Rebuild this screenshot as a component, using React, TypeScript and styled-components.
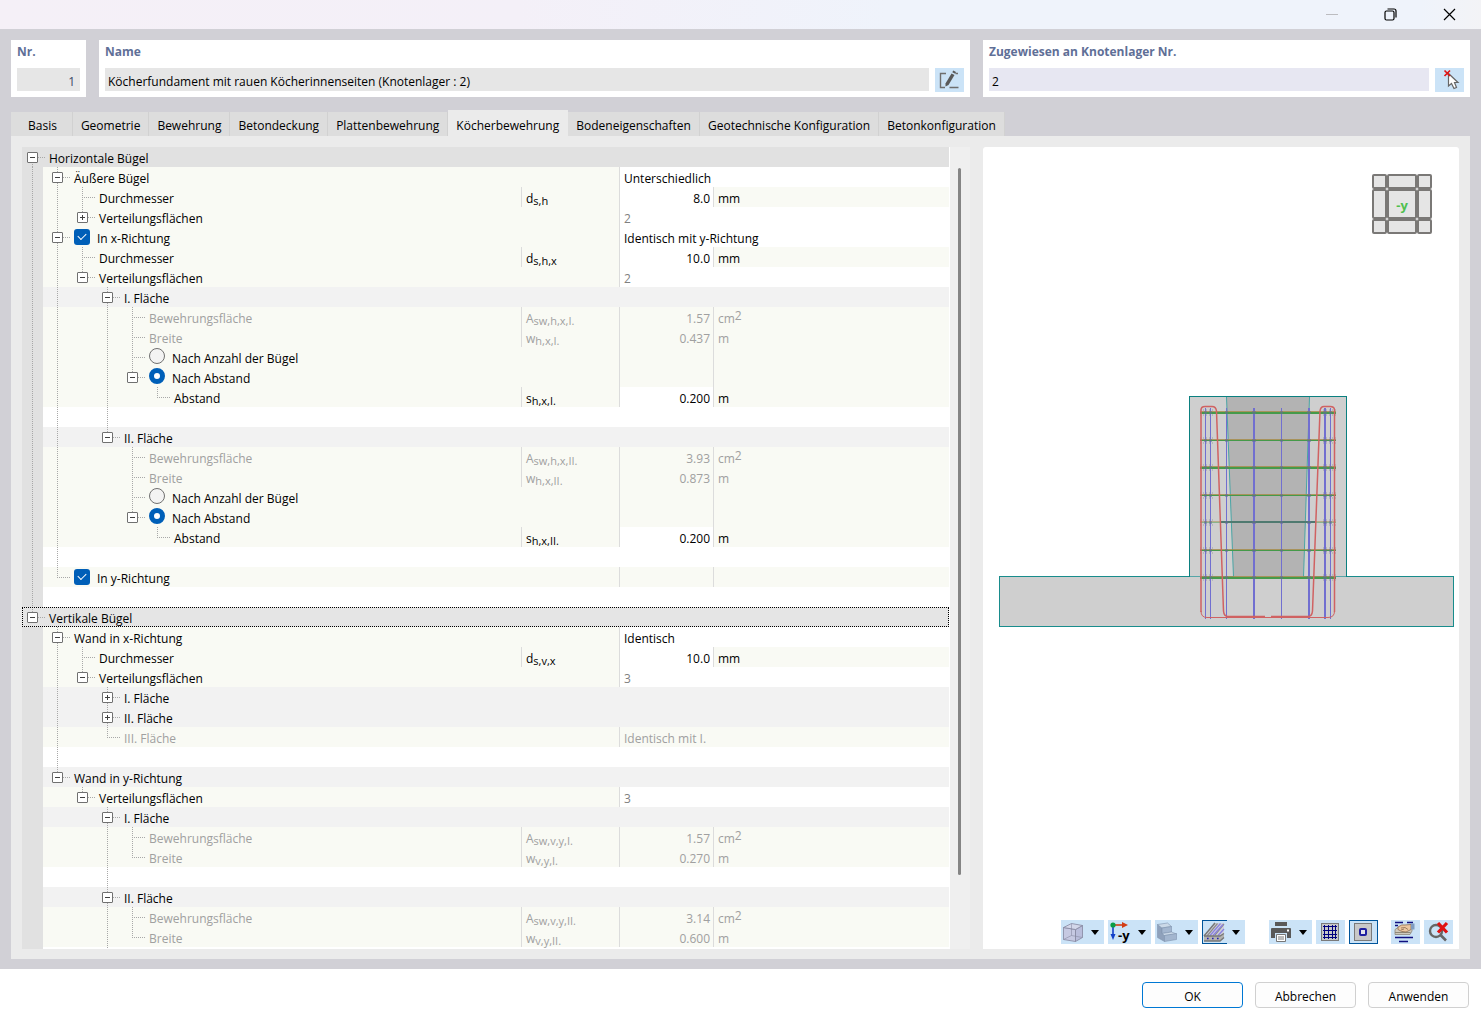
import React from "react";
import styled, { createGlobalStyle, css } from "styled-components";

const c = {
  frame: "#d1d0d6",
  page: "#ebebeb",
  tab: "#dddddd",
  group: "#e1e1e1",
  section: "#f2f2f2",
  cell: "#f9faf4",
  line: "#dcdcdc",
  dots: "#a8a8a8",
  muted: "#a0a0a0",
  count: "#808080",
  accent: "#005fb8",
  tool: "#cbe3f7",
  caption: "#5f6f97",
};

const GlobalStyle = createGlobalStyle`
  *, *::before, *::after { box-sizing: border-box; }
  body { margin: 0; }
  body, button, input { font-family: "Open Sans", "Noto Sans", sans-serif; font-size: 12px; line-height: 20px; color: #000; }
`;

const Dialog = styled.div`
  height: 100vh;
  display: flex;
  flex-direction: column;
  background: #fff;
`;

const TitleBar = styled.header`
  flex: none;
  height: 29px;
  display: flex;
  justify-content: flex-end;
  background: linear-gradient(90deg, #f5f0f7 0%, #f4f0f8 35%, #eff3fb 60%, #eff3fb 96%, #f3f3f6 100%);
`;

const WindowButton = styled.button`
  width: 58px;
  padding: 0;
  border: 0;
  background: none;
  display: grid;
  place-items: center;
  &:last-child { width: 62px; padding-right: 2px; }
`;

const Body = styled.main`
  flex: 1;
  min-height: 0;
  display: flex;
  flex-direction: column;
  padding: 11px 11px 10px;
  background: ${c.frame};
`;

const Cards = styled.div`
  flex: none;
  display: grid;
  grid-template-columns: 75px minmax(0, 1fr) 487px;
  gap: 13px;
`;

const Card = styled.div`
  height: 57px;
  padding: 2px 6px 5px;
  display: flex;
  flex-direction: column;
  justify-content: space-between;
  background: #fff;
`;

const Caption = styled.label`
  font-weight: 700;
  color: ${c.caption};
`;

const FieldRow = styled.div`
  display: flex;
  gap: 6px;
  height: 24px;
`;

const Field = styled.input<{ $tone?: string; $right?: boolean }>`
  flex: 1;
  min-width: 0;
  height: 23px;
  padding: 3px ${(p) => (p.$right ? 5 : 3)}px 0;
  border: 0;
  background: ${(p) => p.$tone ?? "#e6e6e6"};
  color: ${(p) => (p.$right ? "#3c4a66" : "#000")};
  text-align: ${(p) => (p.$right ? "right" : "left")};
`;

const ToolButton = styled.button<{ $wide?: boolean; $on?: boolean }>`
  flex: none;
  position: relative;
  width: ${(p) => (p.$wide ? 43 : 29)}px;
  height: 24px;
  padding: 0 0 0 ${(p) => (p.$wide ? 0 : 2)}px;
  border: 0;
  background: ${c.tool};
  display: flex;
  align-items: center;
  ${(p) => p.$on && !p.$wide && css`box-shadow: inset 0 0 0 1px #00559b;`}
  ${(p) => p.$on && p.$wide && css`
    &::before {
      content: "";
      position: absolute;
      inset: 0 18px 0 0;
      border: 1px solid #00559b;
      border-right: 0;
    }
  `}
`;

const Tabs = styled.nav`
  flex: none;
  display: flex;
  align-items: flex-end;
  height: 26px;
  margin-top: 13px;
`;

const Tab = styled.button<{ $active?: boolean }>`
  height: ${(p) => (p.$active ? 26 : 24)}px;
  padding: ${(p) => (p.$active ? 5 : 3)}px 8px 0;
  border: 0;
  border-right: 1px solid ${(p) => (p.$active ? c.page : "#d1d1d1")};
  background: ${(p) => (p.$active ? c.page : c.tab)};
  white-space: nowrap;
  &:first-child { padding: 3px 15px 0 17px; }
`;

const Page = styled.section`
  flex: 1;
  min-height: 0;
  padding: 11px 11px 10px;
  display: grid;
  grid-template-columns: minmax(0, 1fr) 476px;
  grid-template-rows: minmax(0, 1fr);
  gap: 13px;
  background: ${c.page};
`;

const TreePane = styled.div`
  display: flex;
  overflow: hidden;
  background: linear-gradient(90deg, ${c.group} 21px, #fff 21px);
`;

const TreeTable = styled.table`
  flex: 1;
  align-self: flex-start;
  min-width: 0;
  margin-right: 1px;
  table-layout: fixed;
  border-collapse: collapse;
`;

const Col = styled.col<{ $w?: number }>`
  width: ${(p) => (p.$w ? `${p.$w}px` : "auto")};
`;

const ScrollTrack = styled.div`
  flex: none;
  width: 20px;
  padding: 21px 8px 0;
  background: #efefef;
`;

const ScrollThumb = styled.div`
  width: 3px;
  height: 90.5%;
  border-radius: 2px;
  background: #858585;
`;

type Tone = "cell" | "section" | "group" | "blank";
const toneColor: Record<Tone, string> = { cell: c.cell, section: c.section, group: c.group, blank: "#fff" };

const Row = styled.tr<{ $tone: Tone; $focus?: boolean }>`
  height: 20px;
  background: ${(p) => toneColor[p.$tone]};
  ${(p) => p.$focus && css`outline: 1px dotted #000; outline-offset: -1px; background: #e5e5e5;`}
`;

const Cell = styled.td<{ $line?: boolean; $white?: boolean; $ink?: string; $right?: boolean }>`
  height: 20px;
  padding: 4px ${(p) => (p.$right ? 3 : 4)}px 0 ${(p) => (p.$line ? 5 : 0)}px;
  line-height: 16px;
  white-space: nowrap;
  text-align: ${(p) => (p.$right ? "right" : "left")};
  color: ${(p) => p.$ink ?? "#000"};
  ${(p) => p.$white && css`background: #fff;`}
  ${(p) => p.$line && css`box-shadow: inset 1px 0 0 ${c.line};`}
  sub, sup { line-height: 0; }
  sub { font-size: 11px; vertical-align: -2px; }
  sup { font-size: 12px; vertical-align: 3px; }
`;

const LabelCell = styled.td`
  height: 20px;
  padding: 0;
`;

const LabelLine = styled.div`
  display: flex;
  height: 20px;
`;

const LabelText = styled.span<{ $muted?: boolean; $control?: boolean }>`
  padding: 4px 0 0 ${(p) => (p.$control ? 7 : 2)}px;
  line-height: 16px;
  white-space: nowrap;
  color: ${(p) => (p.$muted ? c.muted : "#000")};
`;

const ControlLabel = styled.label`
  display: flex;
  padding-left: 2px;
`;

type Guide = "none" | "full" | "half" | "low";

const guideArea: Record<Guide, string> = {
  none: "0 0",
  full: "1px 20px",
  half: "1px 11px",
  low: "1px 9px",
};

/* One indentation step: vertical guide, plus the connector for the row's own step. */
const Step = styled.span<{ $guide: Guide; $gutter?: boolean; $own?: boolean }>`
  flex: none;
  width: 25px;
  height: 20px;
  padding: 5px 0 0 5px;
  background-repeat: no-repeat;
  background-image: repeating-linear-gradient(${c.dots} 0 1px, transparent 1px 2px),
    repeating-linear-gradient(90deg, ${c.dots} 0 1px, transparent 1px 2px),
    linear-gradient(${c.group}, ${c.group});
  background-size: ${(p) => guideArea[p.$guide]}, ${(p) => (p.$own ? "13px 1px" : "0 0")},
    ${(p) => (p.$gutter ? "21px 20px" : "0 0")};
  background-position: 10px ${(p) => (p.$guide === "low" ? 11 : 0)}px, 10px 10px, 0 0;
`;

const Toggle = styled.button`
  display: block;
  width: 11px;
  height: 11px;
  padding: 0;
  border: 1px solid #707070;
  border-radius: 1px;
  background: #fff;
  svg { display: block; }
`;

const Check = styled.input`
  appearance: none;
  width: 16px;
  height: 16px;
  margin: 2px 0 0;
  border-radius: 3px;
  background: ${c.accent};
  display: grid;
  place-items: center;
  &::before {
    content: "";
    width: 8px;
    height: 5px;
    margin-top: -3px;
    border: solid #fff;
    border-width: 0 0 1px 1px;
    transform: rotate(-45deg);
  }
`;

const Radio = styled.input`
  appearance: none;
  width: 16px;
  height: 16px;
  margin: 1px 0 0;
  border: 1px solid #707070;
  border-radius: 50%;
  background: #f3f3f3;
  &:checked { border: 5px solid ${c.accent}; background: #fff; }
`;

const ValueInput = styled.input`
  display: block;
  width: 100%;
  height: 16px;
  padding: 0;
  border: 0;
  background: none;
  text-align: right;
  line-height: 16px;
`;

const View = styled.div`
  position: relative;
  display: flex;
  flex-direction: column;
  border-radius: 3px 3px 0 0;
  background: #fff;
`;

const Scene = styled.svg`
  flex: 1;
  min-height: 0;
  width: 100%;
`;

const NavCube = styled.svg`
  position: absolute;
  top: 27px;
  right: 27px;
`;

const Toolbar = styled.div`
  flex: none;
  display: flex;
  justify-content: flex-end;
  gap: 4px;
  padding: 5px 6px 5px;
`;

const Spacer = styled.span<{ $w: number }>`
  width: ${(p) => p.$w}px;
`;

const Footer = styled.footer`
  flex: none;
  display: flex;
  justify-content: flex-end;
  gap: 12px;
  height: 51px;
  padding: 13px 12px 0;
`;

const FooterButton = styled.button<{ $primary?: boolean }>`
  width: 101px;
  height: 26px;
  padding: 3px 0 0;
  border: 1px solid ${(p) => (p.$primary ? "#0078d4" : "#d0d0d0")};
  border-radius: 4px;
  background: #fdfdfd;
`;

type Kind = "plain" | "check" | "radio" | "radioOn";
interface Item {
  label?: string;
  guides: string;
  box?: "+" | "-";
  kind?: Kind;
  tone?: Tone;
  muted?: boolean;
  focus?: boolean;
  sym?: [string, string];
  value?: string;
  unit?: string;
  wide?: string;
  wideMuted?: boolean;
  split?: boolean;
}

const g: Record<string, Guide> = { "|": "full", ".": "none", L: "half", r: "low" };

const flaeche = (roman: string, area: string, width: string): Item[] => [
  { label: `${roman} Fläche`, guides: "||.|", box: "-", tone: "section" },
  { label: "Bewehrungsfläche", guides: "||.||", muted: true, sym: ["A", `sw,h,x,${roman}`], value: area, unit: "cm2" },
  { label: "Breite", guides: "||.||", muted: true, sym: ["w", `h,x,${roman}`], value: width, unit: "m" },
  { label: "Nach Anzahl der Bügel", guides: "||.||", kind: "radio", split: true },
  { label: "Nach Abstand", guides: "||.|L", box: "-", kind: "radioOn", split: true },
  { label: "Abstand", guides: "||.|.L", sym: ["s", `h,x,${roman}`], value: "0.200", unit: "m" },
];

const second = flaeche("II.", "3.93", "0.873").map((it, i) => ({
  ...it,
  guides: i === 0 ? "||.L" : it.guides.slice(0, 3) + "." + it.guides.slice(4),
}));

const items: Item[] = [
  { label: "Horizontale Bügel", guides: "r", box: "-", tone: "group" },
  { label: "Äußere Bügel", guides: "||", box: "-", wide: "Unterschiedlich" },
  { label: "Durchmesser", guides: "|||", sym: ["d", "s,h"], value: "8.0", unit: "mm" },
  { label: "Verteilungsflächen", guides: "||L", box: "+", wide: "2", wideMuted: true },
  { label: "In x-Richtung", guides: "||", box: "-", kind: "check", wide: "Identisch mit y-Richtung" },
  { label: "Durchmesser", guides: "|||", sym: ["d", "s,h,x"], value: "10.0", unit: "mm" },
  { label: "Verteilungsflächen", guides: "||L", box: "-", wide: "2", wideMuted: true },
  ...flaeche("I.", "1.57", "0.437"),
  { guides: "||.|", tone: "blank" },
  ...second,
  { guides: "||", tone: "blank" },
  { label: "In y-Richtung", guides: "|L", kind: "check", split: true },
  { guides: "|", tone: "blank" },
  { label: "Vertikale Bügel", guides: "L", box: "-", tone: "group", focus: true },
  { label: "Wand in x-Richtung", guides: ".|", box: "-", wide: "Identisch" },
  { label: "Durchmesser", guides: ".||", sym: ["d", "s,v,x"], value: "10.0", unit: "mm" },
  { label: "Verteilungsflächen", guides: ".|L", box: "-", wide: "3", wideMuted: true },
  { label: "I. Fläche", guides: ".|.|", box: "+", tone: "section" },
  { label: "II. Fläche", guides: ".|.|", box: "+", tone: "section" },
  { label: "III. Fläche", guides: ".|.L", muted: true, wide: "Identisch mit I." },
  { guides: ".|", tone: "blank" },
  { label: "Wand in y-Richtung", guides: ".L", box: "-", tone: "section" },
  { label: "Verteilungsflächen", guides: "..L", box: "-", wide: "3", wideMuted: true },
  { label: "I. Fläche", guides: "...|", box: "-", tone: "section" },
  { label: "Bewehrungsfläche", guides: "...||", muted: true, sym: ["A", "sw,v,y,I."], value: "1.57", unit: "cm2" },
  { label: "Breite", guides: "...|L", muted: true, sym: ["w", "v,y,I."], value: "0.270", unit: "m" },
  { guides: "...|", tone: "blank" },
  { label: "II. Fläche", guides: "...|", box: "-", tone: "section" },
  { label: "Bewehrungsfläche", guides: "...||", muted: true, sym: ["A", "sw,v,y,II."], value: "3.14", unit: "cm2" },
  { label: "Breite", guides: "...|L", muted: true, sym: ["w", "v,y,II."], value: "0.600", unit: "m" },
  { guides: "...|", tone: "blank" },
];

function TreeLabel({ item, index }: { item: Item; index: number }) {
  const steps = item.guides.split("");
  const { kind = "plain", label, box, muted } = item;
  return (
    <LabelLine>
      {steps.map((s, i) => {
        const own = !!label && i === steps.length - 1;
        return (
          <Step key={i} $guide={g[s]} $own={own} $gutter={i === 0 && item.tone !== "group"}>
            {own && box && (
              <Toggle type="button" aria-label={label} aria-expanded={box === "-"}>
                <svg width="9" height="9" viewBox="0 0 9 9" stroke="#404040" shapeRendering="crispEdges">
                  <path d={box === "-" ? "M2 4.5H7" : "M2 4.5H7M4.5 2V7"} />
                </svg>
              </Toggle>
            )}
          </Step>
        );
      })}
      {kind === "plain" ? (
        <LabelText $muted={muted}>{label}</LabelText>
      ) : (
        <ControlLabel>
          {kind === "check" ? (
            <Check type="checkbox" defaultChecked />
          ) : (
            <Radio type="radio" name={`mode-${kind === "radio" ? index : index - 1}`} defaultChecked={kind === "radioOn"} />
          )}
          <LabelText $control>{label}</LabelText>
        </ControlLabel>
      )}
    </LabelLine>
  );
}

function TreeRow({ item, index }: { item: Item; index: number }) {
  const { tone = "cell", sym, value, unit, muted, wide, split } = item;
  const full = tone !== "cell";
  const ink = muted ? c.muted : undefined;
  return (
    <Row $tone={tone} $focus={item.focus}>
      <LabelCell colSpan={full ? 4 : sym ? 1 : 2}>
        <TreeLabel item={item} index={index} />
      </LabelCell>
      {sym && (
        <Cell $line $ink={ink}>
          {sym[0]}
          <sub>{sym[1]}</sub>
        </Cell>
      )}
      {wide !== undefined && (
        <Cell colSpan={2} $line $white={!muted} $ink={item.wideMuted ? c.count : ink}>
          {wide}
        </Cell>
      )}
      {value !== undefined && (
        <>
          <Cell $line $right $white={!muted} $ink={ink}>
            {muted ? value : <ValueInput aria-label={`${item.label} ${sym?.join("")}`} defaultValue={value} />}
          </Cell>
          <Cell $line $ink={ink}>
            {unit === "cm2" ? <>cm<sup>2</sup></> : unit}
          </Cell>
        </>
      )}
      {split && (
        <>
          <Cell $line />
          <Cell $line />
        </>
      )}
    </Row>
  );
}

const levels = [265, 293, 320, 348, 375, 403, 430];
const bars: [number, number][] = [[222, 1], [227, 1], [243, 1], [270, 2], [298, 1], [325, 2], [341, 2], [347, 1]];

function Model() {
  return (
    <Scene viewBox="0 0 476 768" preserveAspectRatio="xMidYMid meet" role="img" aria-label="Köcherfundament">
      <rect x="16.5" y="429.5" width="454" height="50" fill="#cfcfcf" stroke="#188c8c" />
      <rect x="206.5" y="249.5" width="157" height="180" fill="#cfcfcf" stroke="#0b8080" />
      <path d="M207 429.5H363" stroke="#56a6a8" />
      <path d="M243.5 250H326.5L320.5 430H250.5Z" fill="#b3b3b3" />
      <path d="M243.5 250L250.5 430M326.5 250L320.5 430" fill="none" stroke="#4aa5a5" />
      <path d="M206.5 249.5H363.5" stroke="#0b8080" />
      {bars.map(([x, w]) => (
        <rect key={x} x={x} y="261" width={w} height="211" fill="#716fd0" />
      ))}
      {levels.map((y, i) => (
        <g key={y}>
          <rect x="217" y={y - 1} width="136" height="1" fill="#a48a45" opacity={i === 4 ? 0.5 : 0.8} />
          <rect x="217" y={y} width="136" height={i % 2 === 0 && i !== 4 ? 2 : 1} fill="#459a4a" opacity={i === 4 ? 0.5 : 1} />
          {i === 4 && <rect x="238" y={y - 1} width="94" height="2" fill="#4f7a70" />}
          <path
            d={`M217 ${y - 2}H230M217 ${y + 3}H230M340 ${y - 2}H353M340 ${y + 3}H353`}
            stroke="#8f8fa0"
            strokeDasharray="1 2"
            opacity=".8"
          />
          {bars.map(([x, w]) => (
            <rect key={x} x={x - 1} y={y - 1} width={w + 2} height="3" fill="#666a98" opacity=".5" />
          ))}
        </g>
      ))}
      <g fill="none" stroke="#d06262">
        <path d="M218 465V263Q218 259.500 222 259.500H229Q233 259.500 233.500 264L240.500 464Q241 469.500 245 469.500H282" strokeWidth="1.500" />
        <path d="M351.500 465V263Q351.500 259.500 347 259.500H341Q337.500 259.500 337 264L329.500 464Q329 469.500 325 469.500H288" strokeWidth="1.500" />
        <path d="M218 464Q218 470.500 224 470.500H345Q351.500 470.500 351.500 464" />
      </g>
    </Scene>
  );
}

function Cube() {
  const edges: [number, number][] = [[0, 15], [15, 30], [45, 15]];
  return (
    <NavCube width="60" height="60" viewBox="0 0 60 60">
      {edges.map(([y, h]) =>
        edges.map(([x, w]) => (
          <rect key={`${x}-${y}`} x={x + 1} y={y + 1} width={w - 2} height={h - 2} rx="1" fill="#e5e5e5" stroke="#7a7876" strokeWidth="2" />
        )),
      )}
      <text x="30" y="36" textAnchor="middle" fontFamily="Open Sans, sans-serif" fontSize="13" fontWeight="700" fill="#4fc04f">
        -y
      </text>
    </NavCube>
  );
}

const Arrow = () => (
  <svg width="8" height="5" viewBox="0 0 8 5">
    <path d="M0 0H8L4 5Z" fill="#000" />
  </svg>
);

const Icon = styled.svg`
  flex: none;
  width: 24px;
  height: 24px;
  margin: 0 6px 0 0;
  ${ToolButton} > &:only-child { margin: 0; }
`;

const BoxIcon = () => (
  <Icon viewBox="0 0 24 24" stroke="#85879f" strokeWidth=".8" strokeLinejoin="round">
    <path d="M2.500 7.500L14.500 9.500V21.500L2.500 19.500Z" fill="#c6c9e2" />
    <path d="M14.500 9.500L21.500 5.500V17.500L14.500 21.500Z" fill="#b9bddb" />
    <path d="M2.500 7.500L10.500 3.500L21.500 5.500L14.500 9.500Z" fill="#d3d7ea" />
    <path d="M10.500 3.500V15.500L2.500 19.500M10.500 15.500L21.500 17.500" fill="none" opacity=".7" />
  </Icon>
);

const AxisIcon = () => (
  <Icon viewBox="0 0 24 24">
    <path d="M5 5H15" stroke="#d23c14" strokeWidth="1.600" />
    <path d="M14 2L20 5L14 8Z" fill="#d23c14" />
    <path d="M5 5V15" stroke="#1340c8" strokeWidth="1.600" />
    <path d="M2.500 14H7.500L5 20Z" fill="#1340c8" />
    <circle cx="5" cy="5" r="2.600" fill="#0a9c46" />
    <text x="10" y="20" fontFamily="Open Sans, sans-serif" fontSize="13" fontWeight="700">
      -y
    </text>
  </Icon>
);

const StepsIcon = () => (
  <Icon viewBox="0 0 24 24" stroke="#7f93ae" strokeWidth=".6" strokeLinejoin="round">
    <path d="M2.500 4.500L7 8V13.500L9.500 15.500V21.500L2.500 17.500Z" fill="#8fa1bb" />
    <path d="M2.500 4.500L12.500 3L16.500 6.500L7 8Z" fill="#cbd9e8" />
    <path d="M7 8L16.500 6.500V12L7 13.500Z" fill="#a3b6cf" />
    <path d="M7 13.500L16.500 12L21.500 14L9.500 15.500Z" fill="#cbd9e8" />
    <path d="M9.500 15.500L21.500 13.500V19.500L9.500 21.500Z" fill="#a3b6cf" />
  </Icon>
);

const SectionIcon = () => (
  <Icon viewBox="0 0 24 24">
    <path d="M2 16L13 3H22V14L18 16Z" fill="#cfd0da" />
    <path d="M2 16L13 3" stroke="#777" strokeWidth="1.500" />
    <path d="M5 16L15.500 3.500M13 15L22 4" stroke="#8c8c8c" strokeWidth="1.200" />
    <path d="M8 15.500L18.500 3.500M11 15.500L21 4.500M16 15.500L22 9" stroke="#8a82e0" strokeWidth="1.300" />
    <path d="M2 16H18L22 14V17.500L18 21H2Z" fill="#b3b3b0" />
    <path d="M2 16H18L22 13.500M2 21H18L22 17.500" fill="none" stroke="#777" strokeWidth="1.400" />
    <path d="M5 18.500H19" stroke="#241fb0" strokeWidth="1.600" strokeDasharray="1.600 3.400" />
  </Icon>
);

const PrintIcon = () => (
  <Icon viewBox="0 0 24 24">
    <path d="M6 2H18V6H6Z" fill="#595959" />
    <path d="M3 8H21Q22 8 22 9V18H18V13H6V18H2V9Q2 8 3 8Z" fill="#595959" />
    <path d="M7.500 14.500H16.500V21.500H7.500Z" fill="#fff" stroke="#777" />
    <path d="M9 17H15M9 19H15" stroke="#777" />
    <rect x="18" y="9.500" width="2" height="2" fill="#fff" />
  </Icon>
);

const GridIcon = () => (
  <Icon viewBox="0 0 24 24" fill="none" shapeRendering="crispEdges">
    <rect x="3.500" y="3.500" width="17" height="17" fill="#c8c8c8" stroke="#7a7a7a" />
    <path d="M5 6.500H19M5 10.500H19M5 14.500H19M5 17.500H19M6.500 5V19M10.500 5V19M14.500 5V19M17.500 5V19" stroke="#00007e" />
  </Icon>
);

const OpeningIcon = () => (
  <Icon viewBox="0 0 24 24" fill="none">
    <rect x="3.500" y="3.500" width="17" height="17" fill="#c8c8c8" stroke="#7a7a7a" />
    <rect x="9" y="9" width="6" height="6" rx="1" fill="#e4e4ec" stroke="#2020a0" strokeWidth="2" />
  </Icon>
);

const DimensionIcon = () => (
  <Icon viewBox="0 0 24 24" fill="none">
    <path d="M2 2.500H10M14 2.500H20M2 5.500H5M2 17.500H20M6 21.500H15" stroke="#101080" strokeWidth="1.500" />
    <path d="M2 9.500L5 7.500H19V11L17 14.500H2Z" fill="#cfcabd" stroke="#8d8778" strokeWidth=".8" />
    <path d="M2 12.500H17.500" stroke="#8d8778" />
    <path d="M5 7Q9 4 12 5L18 4.500V9.500L13 12Q8 12 5 9.500Z" fill="#ecc7a0" stroke="#8b6c50" strokeWidth=".8" />
    <path d="M8 8L12 7.500L15 9.500M8 10L11 9" stroke="#8b6c50" strokeWidth=".8" />
    <path d="M18 3.500H21.500V9.500H18Z" fill="#7f9cc0" />
  </Icon>
);

const ZoomResetIcon = () => (
  <Icon viewBox="0 0 24 24" fill="none">
    <circle cx="10" cy="11" r="6" stroke="#666" strokeWidth="2.400" />
    <path d="M14.500 15L20 20.500" stroke="#666" strokeWidth="2.600" />
    <path d="M12 3L21 12.500M21 3L12 12.500" stroke="#e01212" strokeWidth="3.200" />
  </Icon>
);

const EditIcon = () => (
  <Icon viewBox="0 0 24 24" fill="none">
    <path d="M9 5.500H3.500V19.500H8M12.500 19.500H21.500M18.500 5.500H21" stroke="#6e6e6e" strokeWidth="1.400" />
    <path d="M14.500 5.500L17.500 7L11.500 17L8.500 18.500L8.500 15.500Z" fill="#595959" />
    <path d="M15.300 4.300L16.300 2.500L19 4L18.200 5.800Z" fill="#595959" />
  </Icon>
);

const PickIcon = () => (
  <Icon viewBox="0 0 24 24" fill="none">
    <path d="M11.500 5.500V18L14.500 15.500L17 20.500L19.500 19.500L17.500 14.500H21Z" fill="#fff" stroke="#666" strokeWidth="1.200" />
    <path d="M7.500 2.500L13 8M13 2.500L7.500 8" stroke="#e01414" strokeWidth="1.700" />
  </Icon>
);

const menuTools: [string, () => React.JSX.Element, boolean][] = [
  ["Darstellung", BoxIcon, false],
  ["Ansicht", AxisIcon, false],
  ["Flächen", StepsIcon, false],
  ["Bewehrung", SectionIcon, true],
];

const tabs = [
  "Basis",
  "Geometrie",
  "Bewehrung",
  "Betondeckung",
  "Plattenbewehrung",
  "Köcherbewehrung",
  "Bodeneigenschaften",
  "Geotechnische Konfiguration",
  "Betonkonfiguration",
];

export default function App() {
  return (
    <Dialog>
      <GlobalStyle />
      <TitleBar>
        <WindowButton aria-label="Minimieren">
          <svg width="12" height="12" stroke="#bcbcc0"><path d="M0 5.500H12" /></svg>
        </WindowButton>
        <WindowButton aria-label="Wiederherstellen">
          <svg width="13" height="13" fill="none" stroke="#000" strokeWidth="1.200">
            <rect x="1" y="3" width="9" height="9" rx="1.500" />
            <path d="M3.500 1H10Q12 1 12 3V9.500" />
          </svg>
        </WindowButton>
        <WindowButton aria-label="Schließen">
          <svg width="13" height="13" stroke="#000" strokeWidth="1.200"><path d="M1 1L12 12M12 1L1 12" /></svg>
        </WindowButton>
      </TitleBar>
      <Body>
        <Cards>
          <Card>
            <Caption htmlFor="nr">Nr.</Caption>
            <FieldRow>
              <Field id="nr" defaultValue="1" $right />
            </FieldRow>
          </Card>
          <Card>
            <Caption htmlFor="name">Name</Caption>
            <FieldRow>
              <Field id="name" defaultValue="Köcherfundament mit rauen Köcherinnenseiten (Knotenlager : 2)" />
              <ToolButton aria-label="Name bearbeiten"><EditIcon /></ToolButton>
            </FieldRow>
          </Card>
          <Card>
            <Caption htmlFor="assigned">Zugewiesen an Knotenlager Nr.</Caption>
            <FieldRow>
              <Field id="assigned" defaultValue="2" $tone="#e7e7f2" />
              <ToolButton aria-label="Auswählen"><PickIcon /></ToolButton>
            </FieldRow>
          </Card>
        </Cards>
        <Tabs>
          {tabs.map((t) => (
            <Tab key={t} $active={t === "Köcherbewehrung"}>{t}</Tab>
          ))}
        </Tabs>
        <Page>
          <TreePane>
            <TreeTable>
              <colgroup>
                <Col />
                <Col $w={98} />
                <Col $w={94} />
                <Col $w={236} />
              </colgroup>
              <tbody>
                {items.map((item, i) => (
                  <TreeRow key={i} item={item} index={i} />
                ))}
              </tbody>
            </TreeTable>
            <ScrollTrack>
              <ScrollThumb />
            </ScrollTrack>
          </TreePane>
          <View>
            <Model />
            <Cube />
            <Toolbar>
              {menuTools.map(([name, Glyph, on]) => (
                <ToolButton key={name} $wide $on={on} aria-label={name}>
                  <Glyph />
                  <Arrow />
                </ToolButton>
              ))}
              <Spacer $w={16} />
              <ToolButton $wide aria-label="Drucken">
                <PrintIcon />
                <Arrow />
              </ToolButton>
              <ToolButton aria-label="Raster"><GridIcon /></ToolButton>
              <ToolButton $on aria-label="Öffnung"><OpeningIcon /></ToolButton>
              <Spacer $w={5} />
              <ToolButton aria-label="Bemaßung"><DimensionIcon /></ToolButton>
              <ToolButton aria-label="Zoom zurücksetzen"><ZoomResetIcon /></ToolButton>
            </Toolbar>
          </View>
        </Page>
      </Body>
      <Footer>
        <FooterButton $primary>OK</FooterButton>
        <FooterButton>Abbrechen</FooterButton>
        <FooterButton>Anwenden</FooterButton>
      </Footer>
    </Dialog>
  );
}
